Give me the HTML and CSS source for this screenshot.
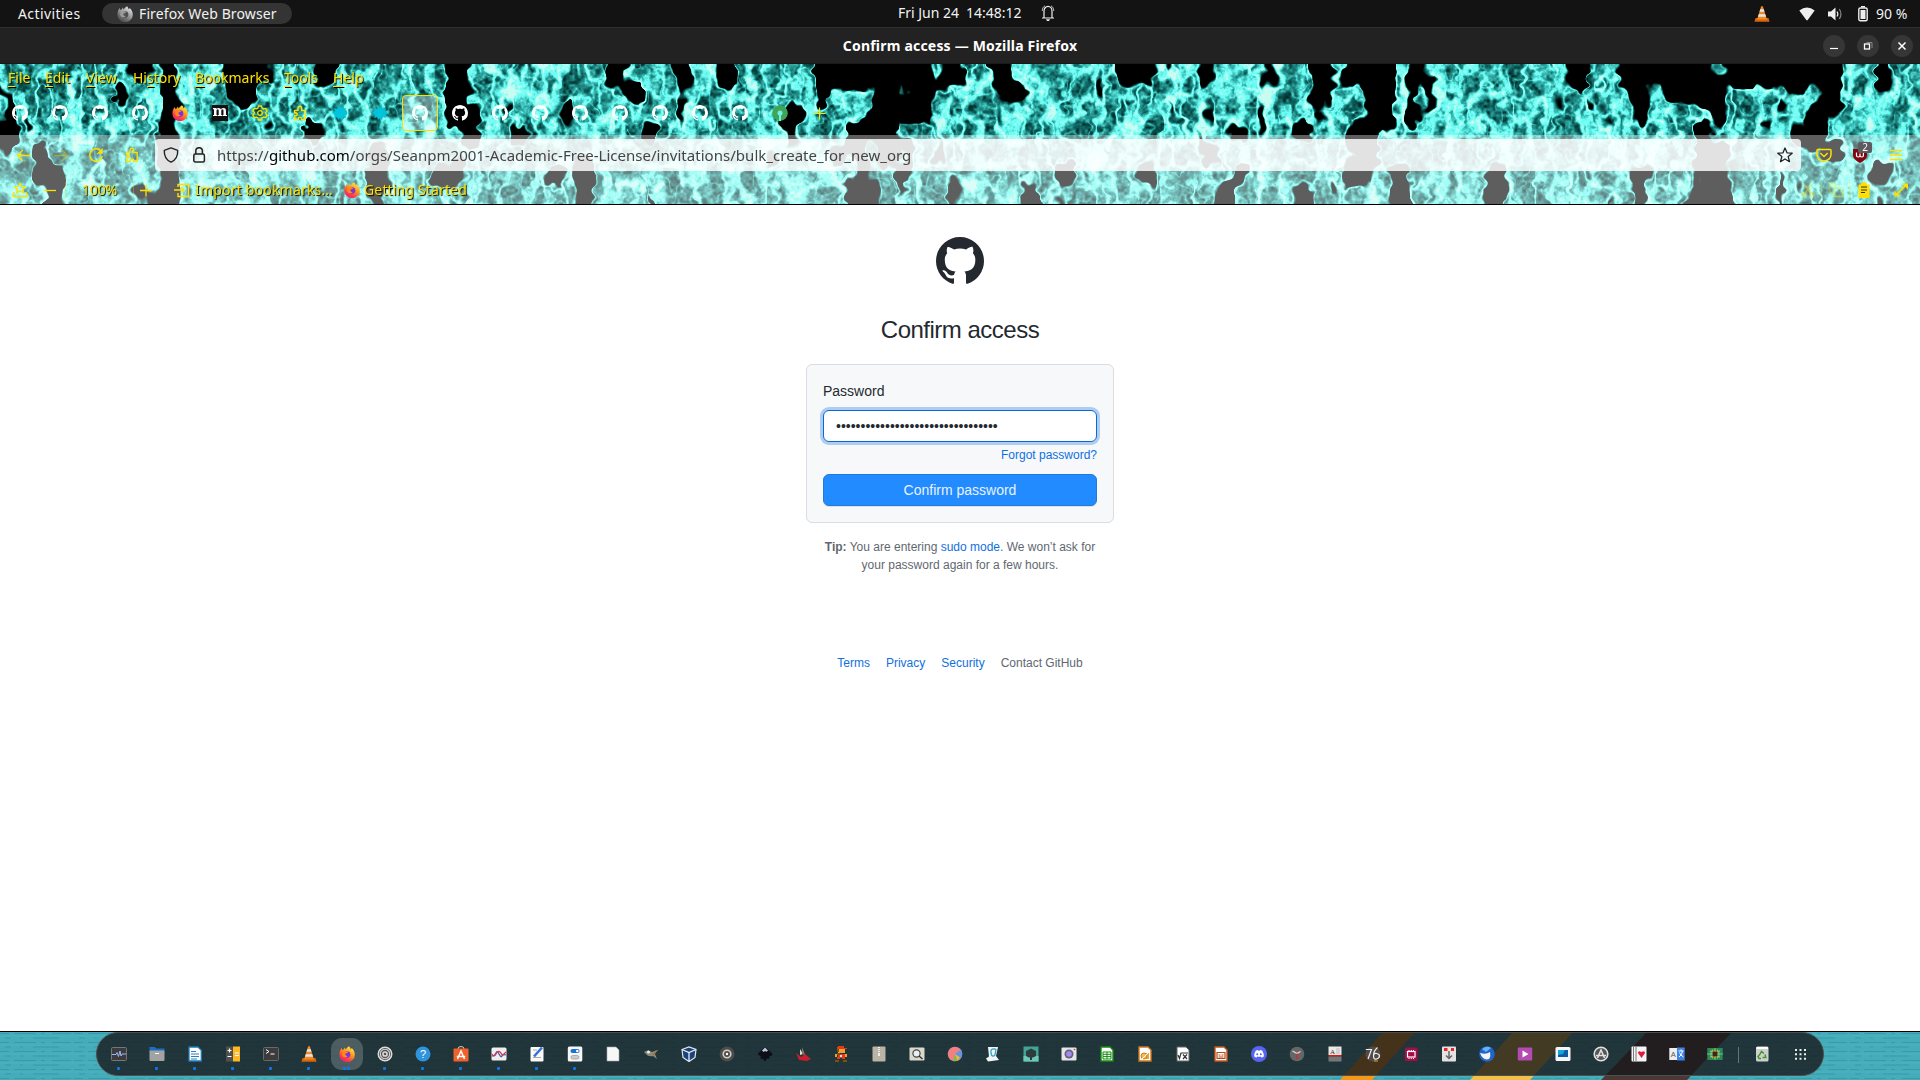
FILE: index.html
```html
<!DOCTYPE html>
<html lang="en">
<head>
<meta charset="utf-8">
<title>Confirm access — Mozilla Firefox</title>
<link rel="stylesheet" href="styles.css">
</head>
<body>
<svg class="defs" aria-hidden="true">
  <defs>
    <linearGradient id="foxg" x1="0.8" y1="0" x2="0.2" y2="1"><stop offset="0" stop-color="#fff44f"/><stop offset=".4" stop-color="#ff9a1f"/><stop offset=".75" stop-color="#ff3b47"/><stop offset="1" stop-color="#e3158b"/></linearGradient>
    <symbol id="gh" viewBox="0 0 16 16"><path fill="currentColor" fill-rule="evenodd" d="M8 0C3.58 0 0 3.58 0 8c0 3.54 2.29 6.53 5.47 7.59.4.07.55-.17.55-.38 0-.19-.01-.82-.01-1.49-2.01.37-2.53-.49-2.69-.94-.09-.23-.48-.94-.82-1.13-.28-.15-.68-.52-.01-.53.63-.01 1.08.58 1.23.82.72 1.21 1.87.87 2.33.66.07-.52.28-.87.51-1.07-1.78-.2-3.64-.89-3.64-3.95 0-.87.31-1.59.82-2.15-.08-.2-.36-1.02.08-2.12 0 0 .67-.21 2.2.82.64-.18 1.32-.27 2-.27.68 0 1.36.09 2 .27 1.53-1.04 2.2-.82 2.2-.82.44 1.1.16 1.92.08 2.12.51.56.82 1.27.82 2.15 0 3.07-1.87 3.75-3.65 3.95.29.25.54.73.54 1.48 0 1.07-.01 1.93-.01 2.2 0 .21.15.46.55.38A8.013 8.013 0 0016 8c0-4.42-3.58-8-8-8z"/></symbol>
    <symbol id="fox" viewBox="0 0 16 16"><path fill="url(#foxg)" d="M10 .2c1 1 1.500 2 1.600 3 .8-.3 1-1.200 1-1.200 2 1.500 3.200 4 3.200 6.500A7.700 7.500 0 0 1 .4 8.800C.3 6 1.500 3.500 2.800 2l.5 2 1.700-.8 .6-1.600 1.200 2C7.500 2 8.500 1 10 .2z"/><circle cx="8" cy="8.600" r="3.300" fill="#7a35d8"/><path fill="#ff8a1a" d="M3.500 5.500c2-.8 4-.3 5.500.5 .2 1-1.500 1.300-2.500 1.500-.5 1.500.5 2.700 2.300 2.400-1.500 2.200-5 1.400-5.600-1z"/></symbol>
    <symbol id="puz" viewBox="0 0 16 16"><path fill="none" stroke="currentColor" stroke-width="1.400" stroke-linejoin="round" d="M2.500 5.500H6V3a1.800 1.800 0 0 1 3.600 0v2.500h3.600v9H9.500v-.8a1.600 1.600 0 0 0-3.200 0v.8H2.500v-3.700h1.300a1.500 1.500 0 0 0 0-3H2.500z"/></symbol>
    <symbol id="cone" viewBox="0 0 16 16"><path fill="#d8640c" d="M1.500 12h13l1 3.800H.5z"/><path fill="#f08a24" d="M7.200.3h1.600L13 13.500H3z"/><path fill="#e6e6e6" d="M6.300 3.200h3.400l.8 2.600h-5zM4.800 8.200h6.400l.8 2.600H4z"/></symbol>
    <symbol id="splat" viewBox="0 0 16 16"><path fill="#00c4dc" d="M6 1l2 2 2-2 1 3 3-1-1 3 3 2-3 2 1 3-3-1-1 3-2-2-2 2-1-3-3 1 1-3-3-2 3-2-1-3 3 1z"/></symbol>
  </defs>
</svg>

<header class="topbar">
  <span class="activities">Activities</span>
  <div class="app-pill"><svg class="s16 grey" viewBox="0 0 16 16"><use href="#fox"/></svg><span>Firefox Web Browser</span></div>
  <div class="clock"><span>Fri Jun 24&nbsp; 14:48:12</span>
    <svg class="s16" viewBox="0 0 16 16" fill="none" stroke="#eee"><path d="M2 13h12M4 12.500V6a4 4.600 0 0 1 8 0v6.500" stroke-width="1.200"/><path d="M2.300 6C2.300 3.500 3.200 1.800 5 .8M13.700 6c0-2.500-.9-4.200-2.700-5.200" stroke-width=".8"/><path fill="#eee" stroke="none" d="M6 14.300h4l-1 1.700H7z"/></svg>
  </div>
  <div class="tray">
    <svg class="s16 t-cone" viewBox="0 0 16 16"><use href="#cone"/></svg>
    <svg class="s16 t-wifi" viewBox="0 0 16 16"><path fill="#eee" d="M.3 4.500Q8-1.500 15.700 4.500L8.500 14.300H7.500z"/></svg>
    <svg class="s16 t-vol" viewBox="0 0 16 16"><path fill="#eee" d="M1 5.500h3L8.500 1.500v13L4 10.500H1z"/><path fill="none" stroke="#eee" stroke-width="1.200" d="M10 5.500q1.700 2.500 0 5"/><path fill="none" stroke="#888" stroke-width="1.200" d="M12.300 3q3.300 5 0 10"/></svg>
    <svg class="s16 t-bat" viewBox="0 0 16 16"><rect x="3.800" y="2" width="8.400" height="12.800" rx="1.500" fill="none" stroke="#eee" stroke-width="1.400"/><path fill="#eee" d="M5.500 4h5v9h-5zM6 0h4v1.500H6z"/></svg>
    <span class="pct">90 %</span>
  </div>
</header>

<div class="titlebar">
  <span class="title">Confirm access — Mozilla Firefox</span>
  <div class="winbtns">
    <i><svg viewBox="0 0 22 22"><path d="M7 13.500h8" stroke="#fff" stroke-width="1.200"/></svg></i>
    <i><svg viewBox="0 0 22 22" fill="none"><path d="M9.500 7.500h5.500v5.500" stroke="#888"/><rect x="7.500" y="9" width="5" height="5" stroke="#fff" stroke-width="1.300"/></svg></i>
    <i><svg viewBox="0 0 22 22"><path d="M7.500 7.500l7 7m0-7l-7 7" stroke="#fff" stroke-width="1.500"/></svg></i>
  </div>
</div>

<section class="chrome">
  <canvas class="theme" width="1920" height="140"></canvas>
  <nav class="menu"><span><u>F</u>ile</span><span><u>E</u>dit</span><span><u>V</u>iew</span><span>Hi<u>s</u>tory</span><span><u>B</u>ookmarks</span><span><u>T</u>ools</span><span><u>H</u>elp</span></nav>
  <div class="tabs">
    <b><svg><use href="#gh"/></svg></b><b><svg><use href="#gh"/></svg></b><b><svg><use href="#gh"/></svg></b><b><svg><use href="#gh"/></svg></b>
    <b><svg><use href="#fox"/></svg></b>
    <b><span class="m">m</span></b>
    <b class="y"><svg viewBox="0 0 16 16" fill="none" stroke="currentColor" stroke-width="1.300" stroke-linejoin="round"><circle cx="8" cy="8" r="2.300"/><path d="M6.500 1h3l.6 2.100 1.500.8 2.100-.5 1.500 2.500L13.700 7.500v1l1.500 1.600-1.500 2.500-2.100-.5-1.500.8-.6 2.100h-3l-.6-2.100-1.500-.8-2.100.5L.8 10.100l1.500-1.600v-1L.8 5.900l1.500-2.500 2.100.5 1.500-.8z"/></svg></b>
    <b class="y"><svg><use href="#puz"/></svg></b>
    <b><svg><use href="#splat"/></svg></b><b><svg><use href="#splat"/></svg></b>
    <b><span class="active"><svg><use href="#gh"/></svg></span></b>
    <b><svg><use href="#gh"/></svg></b><b><svg><use href="#gh"/></svg></b><b><svg><use href="#gh"/></svg></b><b><svg><use href="#gh"/></svg></b><b><svg><use href="#gh"/></svg></b><b><svg><use href="#gh"/></svg></b><b><svg><use href="#gh"/></svg></b><b><svg><use href="#gh"/></svg></b>
    <b><svg viewBox="0 0 16 16"><circle cx="8" cy="8" r="7.800" fill="#3fa557"/><circle cx="8" cy="8" r="2.500" fill="#6df0e6"/><path d="M7 9h2v7H7z" fill="#6df0e6"/></svg></b>
    <b class="y"><svg viewBox="0 0 16 16"><path d="M7.500 2.500v12M1.500 8.500h12" stroke="currentColor" stroke-width="1.200"/></svg></b>
  </div>
  <div class="bars">
    <div class="nav">
      <b class="back"><svg viewBox="0 0 16 16" fill="none" stroke="currentColor" stroke-width="1.400"><path d="M15 8.500H2M7 3L1.500 8.500 7 14"/></svg></b>
      <b class="fwd"><svg viewBox="0 0 16 16" fill="none" stroke="currentColor" stroke-width="1.400"><path d="M1 8.500h13M9 3l5.500 5.500L9 14"/></svg></b>
      <b class="reload"><svg viewBox="0 0 16 16" fill="none" stroke="currentColor" stroke-width="1.500"><path d="M12.500 3.500A6.300 6.300 0 1 0 14.300 9"/><path fill="currentColor" stroke="none" d="M14.700.8v6h-6z"/></svg></b>
      <b class="ext"><svg><use href="#puz"/></svg></b>
      <div class="url">
        <b class="shield"><svg viewBox="0 0 16 16" fill="none" stroke="#222" stroke-width="1.400" stroke-linejoin="round"><path d="M8 .9l6.700 2.500c.3 5.500-1.500 9.500-6.700 11.800C2.800 12.900 1 8.900 1.300 3.400z"/></svg></b>
        <b class="lock"><svg viewBox="0 0 16 16" fill="none" stroke="#222" stroke-width="1.500"><rect x="2.800" y="7" width="10.600" height="8" rx="1.500"/><path d="M4.800 7V4a3.300 3.300 0 0 1 6.600 0v3"/></svg></b>
        <span class="addr">https://<em>github.com</em>/orgs/Seanpm2001-Academic-Free-License/invitations/bulk_create_for_new_org</span>
        <b class="star"><svg viewBox="0 0 16 16" fill="none" stroke="#222" stroke-width="1.300" stroke-linejoin="round"><path d="M8 1l2 4.800 5.200.4-4 3.400 1.300 5.100L8 12l-4.500 2.700 1.300-5.100-4-3.400 5.200-.4z"/></svg></b>
      </div>
      <b class="tool first"><svg viewBox="0 0 16 16" fill="none" stroke="currentColor" stroke-width="1.500"><path d="M1.800 2.500h12.400a.8.8 0 0 1 .8.800V7.500a7 6.500 0 0 1-14 0V3.300a.8.800 0 0 1 .8-.8z"/><path d="M4.300 6L8 9.500 11.700 6"/></svg></b>
      <b class="tool"><svg viewBox="0 0 16 16"><path fill="#800610" d="M1 2h14v6q0 4.500-7 8Q1 12.500 1 8z"/><path d="M4.500 5.500v3q0 1.500 1.700 1.500T8 8.500v-2 2Q8 10 9.700 10t1.700-1.500v-3" fill="none" stroke="#fff" stroke-width="1.200"/></svg><span class="badge">2</span></b>
      <b class="tool"><svg viewBox="0 0 16 16"><path d="M2 3.500h12M2 8h12M2 12.500h12" stroke="currentColor" stroke-width="1.300"/></svg></b>
    </div>
    <div class="marks">
      <b class="k1"><svg viewBox="0 0 16 16" fill="none" stroke="currentColor" stroke-width="1.300" stroke-linejoin="round"><path d="M8 1l1.700 3.300 3.600.4-2.700 2.500.8 3.500L8 9l-3.400 1.700.8-3.500L2.700 4.700l3.600-.4zM2.500 10L1 12v2.500h14V12l-1.500-2"/></svg></b>
      <b class="k2"><svg viewBox="0 0 16 16"><path d="M2 8.500h12" stroke="currentColor" stroke-width="1.300"/></svg></b>
      <i></i><span class="zoom">100%</span><i></i>
      <b class="k3"><svg viewBox="0 0 16 16"><path d="M2 8.500h12M8 2.500v12" stroke="currentColor" stroke-width="1.300"/></svg></b>
      <b class="k4"><svg viewBox="0 0 16 16" fill="none" stroke="currentColor" stroke-width="1.400"><path d="M4 5V2.500h10.500v12H4V11M0 8h10M7 5l3 3-3 3"/></svg></b>
      <span class="imp">Import bookmarks…</span>
      <b class="k5"><svg><use href="#fox"/></svg></b>
      <span class="get">Getting Started</span>
      <div class="edit">
        <b class="dim"><svg viewBox="0 0 16 16" fill="none" stroke="currentColor" stroke-width="1.500"><circle cx="4" cy="12.500" r="2"/><circle cx="12" cy="12.500" r="2"/><path d="M3.500 1.500l7.300 9.500M12.500 1.500L5.200 11"/></svg></b><i></i>
        <b class="dim"><svg viewBox="0 0 16 16" fill="none" stroke="currentColor" stroke-width="1.400"><path d="M5 10.500H2v-9h5l2 2M6.500 6h5l3 3v5.500h-8z"/></svg></b><i></i>
        <b><svg viewBox="0 0 16 16"><path fill="currentColor" d="M5 2.500A3 2.500 0 0 1 11 2.500h2.500v13.500h-11V2.500z"/><path d="M5 5h6M5 8h6M5 10.500h4" stroke="#333"/></svg></b>
        <b class="full"><svg viewBox="0 0 16 16"><path d="M3 13L13 3" stroke="currentColor" stroke-width="1.600"/><path fill="currentColor" d="M9 1.500h6v6zM1.500 8.500v6h6z"/></svg></b>
      </div>
    </div>
  </div>
</section>

<main class="page">
  <svg class="logo"><use href="#gh"/></svg>
  <h1>Confirm access</h1>
  <form class="card">
    <label>Password</label>
    <div class="pw">•••••••••••••••••••••••••••••••••</div>
    <a class="forgot">Forgot password?</a>
    <button type="button">Confirm password</button>
  </form>
  <p class="tip"><strong>Tip:</strong> You are entering <a>sudo mode</a>. We won’t ask for<br>your password again for a few hours.</p>
  <footer><a>Terms</a><a>Privacy</a><a>Security</a><span>Contact GitHub</span></footer>
</main>

<div class="desk">
  <svg class="wall" viewBox="0 0 1920 48"><defs><pattern id="weave" width="74" height="9" patternUnits="userSpaceOnUse"><path d="M0 1.500h9M14 1.500h22M41 1.500h4M52 1.500h19M5 6h6M20 6h3M33 6h26" stroke="#237f8c" stroke-opacity=".4"/><path d="M0 4h74" stroke="#5cc3cf" stroke-opacity=".25"/></pattern></defs><path fill="#45adba" d="M0 0h1920v48H0z"/><path fill="url(#weave)" d="M0 0h1920v48H0z"/><path fill="#f29a18" d="M1340 48h32l43-48h-32z"/><path fill="#f0c048" d="M1470 48h60l43-48h-60z"/><path fill="#4b3735" d="M1601 48h86l45-48h-85z"/></svg>
  <div class="dock">
    <b class="run"><svg viewBox="0 0 16 16"><rect x=".5" y="1.500" width="15" height="13" rx="1" fill="#3c3c40" stroke="#777"/><path d="M1 8.500h4l1-2 1.500 4L9 5l1 5 1-2h4" fill="none" stroke="#9db8f0"/></svg></b>
    <b class="run"><svg viewBox="0 0 16 16"><path fill="#1c6fc4" d="M.5 1H6l1 1.500h8.500V6H.5z"/><rect x=".5" y="4.500" width="15" height="10.500" rx="1" fill="#a3a3a3"/><path d="M6 7.500h4" stroke="#fff"/></svg></b>
    <b class="run"><svg viewBox="0 0 16 16"><path fill="#fff" stroke="#1b7ab8" stroke-width="1.300" d="M2 1h9l3.300 3.300V15H2z"/><path d="M4 5.500h5M4 8h8M4 10.500h8M4 13h6" stroke="#2683bd"/></svg></b>
    <b class="run"><svg viewBox="0 0 16 16"><path fill="#505050" d="M1 .5h7v15H1z"/><path fill="#ffb723" d="M8 .5h7v15H8z"/><path d="M2.500 4.500h4M4.500 2.500v4M2.500 10.500h4M10 7h4M10 9.500h4" stroke="#fff" stroke-width="1.200"/></svg></b>
    <b class="run"><svg viewBox="0 0 16 16"><rect x=".5" y="1.500" width="15" height="13" rx="1" fill="#3c3c3c" stroke="#686868"/><path d="M3 3.500l3 2-3 2M7.500 8h4" stroke="#fff" fill="none"/></svg></b>
    <b class="run"><svg><use href="#cone"/></svg></b>
    <b class="run two on"><svg><use href="#fox"/></svg></b>
    <b class="run"><svg viewBox="0 0 16 16" fill="none"><circle cx="8" cy="8" r="7.500" fill="#ddd"/><circle cx="8" cy="8" r="5.600" stroke="#666"/><circle cx="8" cy="8" r="3.500" stroke="#555" stroke-width="1.300"/><circle cx="8" cy="8" r="1.300" fill="#555"/></svg></b>
    <b class="run"><svg viewBox="0 0 16 16"><circle cx="8" cy="8" r="7.500" fill="#2f93dd"/><text x="8" y="12" text-anchor="middle" font-size="11" fill="#fff">?</text></svg></b>
    <b class="run"><svg viewBox="0 0 16 16"><path d="M5 3Q5 .5 8 .5t3 2.500" stroke="#e8c9a0" fill="none"/><rect x=".5" y="2.500" width="15" height="13" rx="1" fill="#f0622d"/><path d="M4.500 13L8 5l3.500 8M3.800 10.500h8.400" stroke="#fff" stroke-width="1.400" fill="none"/></svg></b>
    <b class="run"><svg viewBox="0 0 16 16"><rect x=".5" y="1.500" width="15" height="13" rx="1.500" fill="#eee"/><path d="M1 10q3 0 4-3t3 1 3 2 4-1" stroke="#3b5bab" stroke-width="1.200" fill="none"/><path d="M1 8q2 4 4 0t4-2 2 3 4-3" stroke="#d3364b" stroke-width="1.200" fill="none"/></svg></b>
    <b class="run"><svg viewBox="0 0 16 16"><rect x="1.500" y="1" width="13" height="14.500" rx="1" fill="#fafafa"/><path d="M4 11.500h8M4 4h4" stroke="#aaa"/><path d="M5 10.500L13 1.500" stroke="#3a6ed8" stroke-width="2.500"/></svg></b>
    <b class="run"><svg viewBox="0 0 16 16"><rect x=".8" y=".5" width="14.500" height="15" rx="1.500" fill="#f6f6f6"/><rect x="3.500" y="3" width="9" height="4" rx="2" fill="#1672d6"/><circle cx="10.300" cy="5" r="1.300" fill="#fff"/><rect x="4" y="9.500" width="8" height="3.500" rx="1.700" fill="#ccc" stroke="#888" stroke-width=".6"/></svg></b>
    <b><svg viewBox="0 0 16 16"><path fill="#f7f7f7" stroke="#aaa" stroke-width=".6" d="M2 1h9l3 3v11H2z"/></svg></b>
    <b><svg viewBox="0 0 16 16"><path fill="#8d8878" d="M1 6q4-3 8 0l5-2-2 4 2 5-4-3q-5 1-7-2z"/><circle cx="5.500" cy="6" r="1.500" fill="#eee"/><path d="M10 9l5-5" stroke="#a36c28"/></svg></b>
    <b><svg viewBox="0 0 16 16"><path fill="#1d4277" stroke="#dfe9f5" stroke-width="1.200" d="M1 3.500L8 1l7 2.500-1 8-6 4-6-4z"/><path d="M1 3.500l7 3 7-3M8 6.500v9" stroke="#e8f0fa" stroke-width="1.300" fill="none"/></svg></b>
    <b><svg viewBox="0 0 16 16" fill="none"><circle cx="8" cy="8" r="7.500" fill="#4c4c4c"/><circle cx="8" cy="8" r="3.800" stroke="#d4ccc0" stroke-width="1.600"/><circle cx="8" cy="8" r="1.200" fill="#fff"/></svg></b>
    <b><svg viewBox="0 0 16 16"><path fill="#0d0f16" d="M8 .8l7.300 7q.7 2-3 2.500l.5 2-3 .5L8 15.500 6 13l-3-.7 1-2Q.3 9 .8 7.800z"/><path fill="#b9c5d8" d="M8 1.500l3 3-1.500 1.200L8 5 6.500 6 5 4.500z"/></svg></b>
    <b><svg viewBox="0 0 16 16"><path fill="#c6202e" d="M1 7l5 4 4-3 6 5-4 2-8-1z"/><path fill="#ddd" d="M5 3l3 5-3 1z"/><path fill="#875" d="M7 1l2 5 1 3-3-1z"/></svg></b>
    <b><svg viewBox="0 0 16 16" shape-rendering="crispEdges"><path fill="#e63a14" d="M5 0h6v2h3v1H4V1h1zM5 8h7v4H5zM4 11h3v2H4zM9 11h3v2H9z"/><path fill="#efa232" d="M5 3h7v4H5zM2 8h2v3H2zM12 8h2v3h-2z"/><path fill="#7b5306" d="M4 3h2v3H4zM4 7h3v2H4zM2 14h4v2H2zM10 14h4v2h-4z"/><path fill="#ddf" d="M7 9h2v2H7z"/></svg></b>
    <b><svg viewBox="0 0 16 16"><rect x="1.500" y=".5" width="13" height="15" rx="1" fill="#b9b4a6"/><path d="M8 1v7" stroke="#eee" stroke-width="2" stroke-dasharray="1 1"/><path fill="#eee" d="M7 8h2v2H7z"/></svg></b>
    <b><svg viewBox="0 0 16 16"><rect x=".5" y="1.500" width="15" height="13" rx="1" fill="#dcd8cd"/><circle cx="7.500" cy="7.500" r="3.600" fill="#e9eef0" stroke="#444" stroke-width="1.200"/><path d="M10 10l3.500 3" stroke="#333" stroke-width="1.500"/></svg></b>
    <b><svg viewBox="0 0 16 16"><circle cx="8" cy="8" r="7.300" fill="#ef8085"/><path fill="#6096e6" d="M8 8l6-4.500Q17 9 12.500 13.500z"/><path fill="#81bb45" d="M8 8l4.500 5.500Q9 16 6 15z"/><path fill="#efb640" d="M8 8l5 3.500-2.500 3.300z"/></svg></b>
    <b><svg viewBox="0 0 16 16"><path fill="#f2f5f6" d="M3 1h10l-2 9 3 4-11 1.500-2-3 3-2z"/><path d="M10.500 3Q5 2 6 7t4 2L11 3" stroke="#2ca1c4" stroke-width="1.300" fill="none"/></svg></b>
    <b><svg viewBox="0 0 16 16"><path fill="#41a596" d="M.5.500h15v15H.5z"/><path fill="#6cc9b5" d="M.5 10h15v5.500H.5z"/><path fill="#303b3d" d="M3 5l5-2.500L13 5v5l-3 1.500H9V14H7v-2.500H6L3 10z"/></svg></b>
    <b><svg viewBox="0 0 16 16"><rect x=".5" y="1.500" width="15" height="13" rx="1" fill="#e6e6e6"/><circle cx="8" cy="8" r="4.500" fill="#66617f"/><circle cx="8" cy="8" r="2.800" fill="#a28cf0"/><circle cx="13.500" cy="3.500" r=".8" fill="#e22"/></svg></b>
    <b><svg viewBox="0 0 16 16"><path fill="#fff" stroke="#158a10" stroke-width="1.400" d="M2 1h9l3 3v11H2z"/><path d="M4 6h8v7H4zM4 8.300h8M4 10.600h8M8 6v7" stroke="#158a10" fill="none"/></svg></b>
    <b><svg viewBox="0 0 16 16"><path fill="#fff" stroke="#cc761e" stroke-width="1.400" d="M2 1h9l3 3v11H2z"/><path d="M5 7h7v6H8" fill="#f0a52e"/><circle cx="7" cy="10" r="3" fill="#f5bb50" stroke="#c8801a"/><path d="M5 13l7-7" stroke="#fff"/></svg></b>
    <b><svg viewBox="0 0 16 16"><path fill="#fff" stroke="#666" d="M2 1h9l3 3v11H2z"/><path d="M3 9l1.500 3.500L6 7h7M8 8.500l4 4.500m0-4.500L8 13" stroke="#333" fill="none" stroke-width="1.200"/></svg></b>
    <b><svg viewBox="0 0 16 16"><path fill="#fff" stroke="#c3541d" stroke-width="1.400" d="M2 1h9l3 3v11H2z"/><path d="M4 6.500h8v6H4zM5.500 9h2M8.500 9h2M5.500 11h5" stroke="#b54a15" fill="none" stroke-width="1.200"/></svg></b>
    <b><svg viewBox="0 0 16 16"><circle cx="8" cy="8" r="8" fill="#5865f2"/><path fill="#fff" d="M4.700 4.800q1.300-.7 2.300-.8l.4.700h1.200l.4-.7q1 .1 2.300.8 1.700 2.800 1.500 5.700-1.300 1-2.400 1.100l-.6-1q-1.800.4-3.600 0l-.6 1q-1.100-.1-2.400-1.100-.2-2.900 1.500-5.700z"/><circle cx="6.200" cy="8.300" r="1" fill="#5865f2"/><circle cx="9.800" cy="8.300" r="1" fill="#5865f2"/></svg></b>
    <b><svg viewBox="0 0 16 16"><circle cx="8" cy="8" r="7.300" fill="#666"/><path d="M3.500 5L8 7.500l3.500-2" stroke="#ddd" stroke-width="1.200" fill="none"/><path d="M8 7.500V13" stroke="#d22" stroke-width="1.200"/></svg></b>
    <b><svg viewBox="0 0 16 16"><path fill="#e9e9e6" d="M1.500.5h13V9h-13z"/><path fill="#e11" d="M1.500 9h13v1.500h-13z"/><path fill="#777" d="M1.500 10.500h13v5h-13z"/><path d="M9 3h4M9 5h4M9 7h4" stroke="#bbb"/><text x="5.500" y="7.500" text-anchor="middle" font-size="7" fill="#333" font-family="Liberation Serif">A</text></svg></b>
    <b><svg viewBox="0 0 16 16"><circle cx="8" cy="8" r="7.500" fill="#514b48"/><path d="M.8 3.500h5.700L3 13M12.500 1.500Q8.500 5 8.500 9.500t3 3.500 3-3-3-2.500-2.800 2" fill="none" stroke="#eee" stroke-width="1.200"/><path d="M9 15h4" stroke="#e99a22"/></svg></b>
    <b><svg viewBox="0 0 16 16"><rect x="2" y="1.500" width="12.500" height="13.500" rx="1.500" fill="#a50d46"/><rect x="4.500" y="5.500" width="7.500" height="5.500" fill="none" stroke="#fff" stroke-width="1.200"/><path d="M6 4v1M8.300 4v1M10.500 4v1M6 12v1M8.300 12v1M10.500 12v1" stroke="#fff"/></svg></b>
    <b><svg viewBox="0 0 16 16"><rect x="1" y=".5" width="14" height="15" rx="1" fill="#e3e3e3"/><path fill="#e22" d="M3 2h3.500v3H3zM10 2h3v3h-3z"/><path d="M8 5v7M5 9.500l3 3 3-3" stroke="#666" stroke-width="1.500" fill="none"/></svg></b>
    <b><svg viewBox="0 0 16 16"><circle cx="8" cy="8" r="7.800" fill="#2264c9"/><path fill="#67b4f2" d="M3 3Q8-1 12 2L7 6z"/><path fill="#f3f3f3" d="M1 7q6 2 10-1 1 5-1 7-6 2-9-6z"/></svg></b>
    <b><svg viewBox="0 0 16 16"><rect x=".8" y="1.500" width="14.400" height="13" rx="1" fill="#b44bb5"/><path fill="#fff" d="M5.500 4.500v7l6-3.500z"/></svg></b>
    <b><svg viewBox="0 0 16 16"><rect x=".5" y="1" width="15" height="14" rx="1.500" fill="#f4f6f8"/><path fill="#16a3e0" d="M3 4h10v7H3z"/><path fill="#0d5ba3" d="M3 11V9l5-1 2-4h3v7z"/></svg></b>
    <b><svg viewBox="0 0 16 16" fill="none" stroke="#e1e1e1"><circle cx="8" cy="8" r="6.800" fill="#555" stroke-width="1.600"/><path d="M4.500 12L8 4l3.500 8M3 9.500h10" stroke-width="1.600"/></svg></b>
    <b><svg viewBox="0 0 16 16"><rect x=".5" y=".5" width="15" height="15" rx="1" fill="#f5f5f5"/><path d="M2.500 1v14M5 1v14" stroke="#777"/><path fill="#e11b3c" d="M10.500 12L7 7q0-3 3.500-1 3.500-2 3.500 1z"/></svg></b>
    <b><svg viewBox="0 0 16 16"><path fill="#eee" d="M.3 2h8v12h-8z"/><path fill="#3d83e8" d="M8 1.500h7.700v13H8z"/><text x="4.300" y="11" text-anchor="middle" font-size="7.500" fill="#555">A</text><path d="M9.500 5h5M12 3.500V5M10 11q3-2 3.500-6M10.500 6.500q1 3 4 4.500" stroke="#fff" fill="none"/></svg></b>
    <b><svg viewBox="0 0 16 16"><path fill="#27895a" d="M.3 2h15.400v12H.3z"/><path d="M4 4v8M12 4v8M0 8h16M8 2v12" stroke="#6cc08f"/><path d="M5.500 3.500v9M8 3.500v9M10.500 3.500v9M3.500 5.500h9M3.500 8h9M3.500 10.500h9" stroke="#ebc12a" stroke-width=".8"/><path fill="#2b2b2b" d="M5.500 5.500h5v5h-5z"/></svg></b>
    <i></i>
    <b class="bin"><svg viewBox="0 0 16 16"><rect x="2" y=".5" width="12.500" height="15" rx="1.500" fill="#cfcfcf"/><path fill="#fff" d="M2.500 1h11.500v2H2.500z"/><path d="M5.500 9l2-3.500 2.500 2M11 8.500l.8 3H8.500M7 12.500H5l-1-2 1.500-1.500" stroke="#3a9b2c" stroke-width="1.500" fill="none"/></svg></b>
    <b><svg viewBox="0 0 16 16" fill="#eee"><path d="M3 3h2v2H3zM7.500 3h2v2h-2zM12 3h2v2h-2zM3 7.300h2v2H3zM7.500 7.300h2v2h-2zM12 7.300h2v2h-2zM3 11.700h2v2H3zM7.500 11.700h2v2h-2zM12 11.700h2v2h-2z"/></svg></b>
  </div>
</div>
<script src="theme.js"></script>
</body>
</html>
```
FILE: styles.css
```css
* { box-sizing: border-box; }
body { margin: 0; width: 1920px; height: 1080px; overflow: hidden; display: flex; flex-direction: column; background: #fff; font: 14px/18px "Noto Sans", "Open Sans", sans-serif; }
b, i, em { font-weight: normal; font-style: normal; }
svg { display: block; width: 16px; height: 16px; flex: none; }
.defs { position: absolute; width: 0; height: 0; }

.topbar { height: 28px; flex: none; background: #131313; border-bottom: 1px solid #303030; color: #f2f2f2; display: grid; grid-template-columns: 898px 1fr auto; align-items: center; grid-template-areas: "l c r"; }
.activities { grid-area: l; margin-left: 18px; letter-spacing: .42px; }
.app-pill { grid-area: l; margin-left: 102px; width: 190px; height: 21px; border-radius: 11px; background: #343434; display: flex; align-items: center; gap: 6px; padding-left: 15px; white-space: nowrap; }
.app-pill span { letter-spacing: .12px; }
.grey { filter: grayscale(1); }
.clock { grid-area: c; display: flex; align-items: center; gap: 17px; height: 26px; padding-bottom: 1px; }
.clock span { width: 125px; white-space: nowrap; letter-spacing: -.02px; }
.tray { grid-area: r; display: flex; align-items: center; height: 26px; padding-right: 12px; }
.t-cone { margin-right: 29px; }
.t-wifi { margin-right: 12px; }
.t-vol { margin-right: 12px; }
.t-bat { margin-right: 5px; }
.pct { width: 32px; letter-spacing: 0; white-space: nowrap; }

.titlebar { height: 36px; flex: none; background: #222; border-bottom: 1px solid #1a1a1a; color: #fff; display: grid; grid-template-columns: 1fr auto 1fr; align-items: center; }
.title { grid-column: 2; font-weight: bold; letter-spacing: .2px; }
.winbtns { justify-self: end; display: flex; gap: 12px; padding-right: 7px; }
.winbtns i { width: 22px; height: 22px; border-radius: 50%; background: #363636; }
.winbtns svg { width: 22px; height: 22px; }

.chrome { position: relative; height: 141px; flex: none; background: #000; color: #ffe000; display: flex; flex-direction: column; }
.theme { position: absolute; left: 0; top: 0; }
.menu, .tabs, .bars { position: relative; display: flex; }
.menu { height: 29px; padding: 0 0 2px 8px; align-items: center; text-shadow: 1px 1px 1px #000; }
.menu span { width: 37px; white-space: nowrap; }
.menu span:nth-child(2) { width: 41px; }
.menu span:nth-child(3) { width: 47px; }
.menu span:nth-child(4) { width: 62px; }
.menu span:nth-child(5) { width: 89px; }
.menu span:nth-child(6) { width: 49px; }
.menu u { text-underline-offset: 3px; }
.tabs { height: 42px; }
.tabs b { width: 40px; height: 40px; display: grid; place-items: center; color: #fff; }
.tabs b.y { color: #ffe000; }
.m { width: 16px; height: 16px; background: #111; color: #fff; font: bold 14px/12px "DejaVu Serif", serif; text-align: center; }
.active { width: 36px; height: 36px; border: 1px solid #ffe000; border-radius: 4px; background: rgba(255,255,255,.37); display: grid; place-items: center; }
.bars { height: 69px; background: rgba(255,255,255,.37); flex-direction: column; }
.nav { height: 41px; display: flex; align-items: center; padding: 0 0 1px 5px; }
.nav b, .marks b { display: grid; place-items: center; }
.back { width: 38px; }
.fwd { width: 36px; opacity: .4; }
.reload { width: 34px; }
.ext { width: 38px; }
.url { width: 1646px; height: 32px; margin-left: 4px; border-radius: 4px; background: rgba(255,255,255,.82); display: flex; align-items: center; }
.shield, .star { width: 32px; }
.lock { width: 24px; }
.addr { margin-left: 6px; flex: 1; color: #444; font-size: 15px; letter-spacing: .03px; }
.addr em { color: #000; }
.tool { width: 36px; position: relative; }
.first { margin-left: 5px; }
.badge { position: absolute; left: 16px; top: -5px; width: 14px; height: 11px; background: #5c5c60; border-radius: 2px; color: #fff; font-size: 10px; line-height: 11px; text-align: center; }
.marks { height: 28px; display: flex; align-items: center; text-shadow: 1px 1px 1px #000; }
.marks i { width: 1px; height: 16px; background: rgba(255,224,0,.3); }
.k1 { width: 39px; }
.k2 { width: 22px; margin-right: 4px; }
.zoom { width: 67px; text-align: center; letter-spacing: -.1px; }
.k3 { width: 24px; }
.k4 { margin-left: 15px; width: 18px; }
.imp { margin-left: 4px; width: 149px; white-space: nowrap; letter-spacing: .2px; }
.k5 { width: 16px; }
.get { margin-left: 4px; white-space: nowrap; letter-spacing: .15px; }
.edit { margin-left: auto; display: flex; align-items: center; padding-right: 6px; }
.edit b { width: 27px; }
.dim { opacity: .45; }
.edit .full { margin-left: 11px; width: 26px; }

.page { height: 826px; flex: none; display: flex; flex-direction: column; align-items: center; padding-top: 32px; font-family: "Liberation Sans", Arial, sans-serif; color: #24292f; }
.logo { width: 48px; height: 48px; }
h1 { margin: 27px 0 16px; font-size: 24px; font-weight: 300; line-height: 36px; letter-spacing: -.5px; }
.card { width: 308px; height: 159px; border: 1px solid #d8dee4; border-radius: 6px; background: #f6f8fa; padding: 16px; display: flex; flex-direction: column; font-size: 14px; line-height: 21px; }
.pw { margin-top: 8px; height: 32px; border: 1px solid #0969da; border-radius: 6px; box-shadow: 0 0 0 3px rgba(9,105,218,.3); background: #fff; padding: 0 12px; line-height: 31px; }
.page a { color: #1070e0; }
.forgot { align-self: flex-end; font-size: 12px; line-height: 18px; margin: 4px 0 10px; }
button { height: 32px; flex: none; border: 1px solid #1f7ae0; border-radius: 6px; background: #218bff; color: #e8f2ff; font: 14px/20px "Liberation Sans", Arial, sans-serif; box-shadow: 0 1px 0 rgba(27,31,36,.1); }
.tip { margin: 15px 0 0; font-size: 12px; line-height: 18px; text-align: center; color: #5f6871; }
.page footer { margin-top: 80px; display: flex; gap: 16px; font-size: 12px; line-height: 18px; color: #5f6871; }

.desk { height: 49px; flex: none; border-top: 1px solid #000; position: relative; }
.wall { position: absolute; width: 1920px; height: 48px; }
.dock { position: relative; margin-left: 96px; width: 1728px; height: 44px; border: 1px solid #4c4f50; border-radius: 22px; background: rgba(24,24,27,.8); display: flex; padding-left: 3px; }
.dock b { width: 38px; height: 42px; display: grid; place-items: center; position: relative; font: 11px "Liberation Sans", sans-serif; }
.dock svg { position: relative; top: 0; }
.dock i { width: 1px; height: 16px; margin: 14px 4px 0 4px; background: #6a7374; }
.dock .on::before { content: ""; position: absolute; left: 3px; top: 5px; width: 32px; height: 32px; border-radius: 11px; background: rgba(255,255,255,.2); }
.run::after { content: ""; position: absolute; left: 17px; top: 34px; width: 3px; height: 3px; border-radius: 1px; background: #0a78e8; }
.two::after { left: 15px; box-shadow: 4px 0 #0a78e8; }
```
FILE: theme.js
```js
// Paints the coral-like browser theme: a density map shaped into outlined growths by noise.
const rows = [
  ["######## + ###   +#+ ####### #", "#######+ ### ## ###+#       + ", "## #####+#  #+# ##++## +   # +", "###+##++ +#      +       ##.##"],
  [".###### +# ###  ############ +", "####+#### ##++####### ##. . +#", "##. ####+#+####+#+###+ +#  #.+", "######++++#+ .   .##+++. ##+##"],
  [".+######## +####+###########  ", "#+##+ ######+#+#### ++##    +#", "##.+#########+#+##+###.##. # +", "#####+#+#++# ####.##+++ .##+++"],
  [" +######## +####+#+ +######## ", "## ##.+### ##+#####+###  .+#+#", "##++##+#######+#+ +## ##  ##+#", "#+####+##+###### ###++  ##+###"],
  ["++ ####### +########### ####+#", "###+##+####+######.### .+ +#.#", "############### ########+ ####", "################  ####++ ####+"],
  ["##  #####+ ############ ###  #", "##+# # ########+#######+.# ##+", "####+# #### ##### ###### ++ ##", "### ###+#+## ###  +##+++### ##"],
  ["### ####.. ############ ####+#", "###### ###+############  #+##.", "#### #+######### ###+ #.##+ ###", "### #+####+#+##.  ###++####+###"]
].map(r => r.map(s => s.padEnd(30, "#").slice(0, 30)).join(""));
const level = { "#": 1, "+": 0.68, ".": 0.4, " ": -0.25 };
const cell = (x, y) => level[rows[Math.max(0, Math.min(6, y))][Math.max(0, Math.min(119, x))]];
const hash = (x, y, s) => {
  let h = Math.imul(x, 374761393) ^ Math.imul(y, 668265263) ^ Math.imul(s, 982451653);
  h = Math.imul(h ^ (h >>> 13), 1274126177);
  return ((h ^ (h >>> 16)) >>> 0) / 4294967295;
};
const blend = (fn, x, y) => {
  const ix = Math.floor(x), iy = Math.floor(y);
  let u = x - ix, v = y - iy;
  u = u * u * (3 - 2 * u); v = v * v * (3 - 2 * v);
  return (fn(ix, iy) * (1 - u) + fn(ix + 1, iy) * u) * (1 - v) + (fn(ix, iy + 1) * (1 - u) + fn(ix + 1, iy + 1) * u) * v;
};
const noise = (x, y, s) => blend((a, b) => hash(a, b, s), x, y);
const ctx = document.querySelector(".theme").getContext("2d");
const img = ctx.createImageData(1920, 140);
for (let y = 0; y < 140; y++) for (let x = 0; x < 1920; x++) {
  const wx = x + 8 * (noise(x / 7, y / 7, 5) - 0.5), wy = y + 8 * (noise(x / 7, y / 7, 6) - 0.5);
  const d = blend(cell, wx / 16 - 0.5, wy / 20 - 0.5);
  const edge = d + 0.9 * (noise(wx / 10, wy / 20, 1) - 0.5) - 0.5;
  const n1 = noise(wx / 11, wy / 22, 2), n2 = noise(wx / 7, wy / 9, 3);
  const inside = Math.max(0, Math.min(1, edge * 6 + 0.5));
  const rim = Math.max(0, 1 - Math.abs(edge - 0.1) * 5);
  const r1 = Math.max(0, 1 - Math.abs(n1 - 0.5) * 5), r2 = Math.max(0, 1 - Math.abs(n2 - 0.5) * 4);
  const strength = Math.max(0, Math.min(1, 0.35 + 0.75 * d));
  let t = inside * (0.16 + 0.45 * noise(x / 3, y / 3, 4) + 0.75 * r1 + 0.35 * r2) * strength + rim * 0.7 * strength;
  t *= 0.84 + 0.3 * noise(x / 1.5, y / 1.5, 8);
  const hot = Math.max(0, t - 1.1);
  const p = (y * 1920 + x) * 4, c = Math.min(1, t);
  img.data[p] = Math.min(200, 108 * c * c + 200 * hot);
  img.data[p + 1] = 252 * c;
  img.data[p + 2] = 243 * c;
  img.data[p + 3] = 255;
}
ctx.putImageData(img, 0, 0);
```
